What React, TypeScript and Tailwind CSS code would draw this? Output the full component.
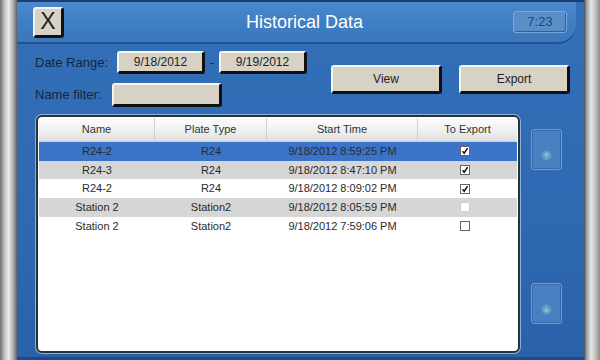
import React from "react";

const rows = [
  { name: "R24-2", plate: "R24", time: "9/18/2012 8:59:25 PM", checked: true, bg: "bg-[#3a73c8]" },
  { name: "R24-3", plate: "R24", time: "9/18/2012 8:47:10 PM", checked: true, bg: "bg-[#d6d6d6]" },
  { name: "R24-2", plate: "R24", time: "9/18/2012 8:09:02 PM", checked: true, bg: "bg-white" },
  { name: "Station 2", plate: "Station2", time: "9/18/2012 8:05:59 PM", checked: false, bg: "bg-[#d6d6d6]", faint: true },
  { name: "Station 2", plate: "Station2", time: "9/18/2012 7:59:06 PM", checked: false, bg: "bg-white" },
];

function StoneButton({ className, children }: { className: string; children?: React.ReactNode }) {
  return (
    <div
      className={
        "flex items-center justify-center rounded-[3px] bg-[#d8d2c5] border-t-2 border-l-2 border-t-[#f4f4f4] border-l-[#f4f4f4] border-b-[3px] border-r-[3px] border-b-[#111] border-r-[#111] text-[#222] " +
        className
      }
    >
      {children}
    </div>
  );
}

function Check({ checked, faint }: { checked: boolean; faint?: boolean }) {
  return (
    <div
      className={
        "w-[10px] h-[10px] flex items-center justify-center bg-white border " +
        (faint ? "border-[#d0d0d0]" : "border-[#666]")
      }
    >
      {checked && (
        <svg width="8" height="8" viewBox="0 0 8 8">
          <path d="M1.5 4.2 L3.2 6.2 L6.6 1.2" stroke="#111" strokeWidth="1.5" fill="none" />
        </svg>
      )}
    </div>
  );
}

function ScrollBtn({ down }: { down?: boolean }) {
  return (
    <div className="w-[31px] h-[41px] rounded-[3px] bg-[#4a7fc2] border border-[#6b9ad4] shadow-[inset_0_0_0_1px_rgba(30,70,130,0.4)] flex items-end justify-center pb-[8px]">
      <svg width="11" height="11" viewBox="0 0 11 11">
        <circle cx="5.5" cy="5.5" r="5" fill="#5d9bc6" />
        {down ? (
          <path d="M5.5 2.5 V8 M3 5.5 L5.5 8 L8 5.5" stroke="#8cc0dc" strokeWidth="1.4" fill="none" />
        ) : (
          <path d="M5.5 8.5 V3 M3 5.5 L5.5 3 L8 5.5" stroke="#8cc0dc" strokeWidth="1.4" fill="none" />
        )}
      </svg>
    </div>
  );
}

export default function App() {
  return (
    <div
      className="w-[600px] h-[360px] flex bg-[#2d66b0] overflow-hidden"
      style={{ fontFamily: '"Liberation Sans", Arial, sans-serif' }}
    >
      {/* left silver frame */}
      <div className="w-[17px] h-full bg-[linear-gradient(90deg,#6e6e6e_0%,#bdbdbd_25%,#ececec_50%,#a8a8a8_80%,#5f5f5f_100%)]" />
      {/* center */}
      <div className="flex-1 flex flex-col border-t-2 border-b-[3px] border-t-[#1d3f70] border-b-[#1f4a85] bg-[linear-gradient(180deg,#3370b8_0%,#2e69b2_60%,#2a62a9_100%)]">
        {/* header */}
        <div className="h-[42px] mr-[8px] rounded-br-[18px] bg-[linear-gradient(180deg,#4b89cc_0%,#3f7ec4_55%,#3a77bd_100%)] border-b-2 border-[#23528f] flex items-center pl-[16px] pr-[9px]">
          <StoneButton className="w-[31px] h-[31px] text-[23px] leading-none">X</StoneButton>
          <div className="flex-1 text-center text-white text-[18px] pl-[32px]">Historical Data</div>
          <div className="w-[54px] h-[22px] rounded-[3px] bg-[#5a8ec8] border border-[#7aa7d8] shadow-[inset_-1px_-1px_0_#2d5d9a] flex items-center justify-center text-[13px] text-[#27466e]">
            7:23
          </div>
        </div>
        {/* controls */}
        <div className="flex pl-[18px] pt-[7px] h-[71px]">
          <div className="flex flex-col gap-[9px] text-[13px] text-[#152440]">
            <div className="flex items-center h-[23px]">
              <span className="w-[82px]">Date Range:</span>
              <StoneButton className="w-[88px] h-[23px] text-[12px]">9/18/2012</StoneButton>
              <span className="w-[14px] text-center">-</span>
              <StoneButton className="w-[88px] h-[23px] text-[12px]">9/19/2012</StoneButton>
            </div>
            <div className="flex items-center h-[24px]">
              <span className="w-[77px]">Name filter:</span>
              <StoneButton className="w-[110px] h-[24px]" />
            </div>
          </div>
          <div className="flex gap-[17px] ml-[24px] mt-[14px]">
            <StoneButton className="w-[111px] h-[29px] text-[12px]">View</StoneButton>
            <StoneButton className="w-[111px] h-[29px] text-[12px]">Export</StoneButton>
          </div>
        </div>
        {/* table + side buttons */}
        <div className="flex flex-1 pl-[19px] pb-[3px]">
          <div className="w-[484px] h-[238px] rounded-[6px] border-2 border-[#24343c] bg-white shadow-[0_0_0_1px_#8fb0d6] p-[1px] overflow-hidden">
            <div className="flex h-[24px] bg-[linear-gradient(180deg,#fdfdfd_0%,#eeeeee_60%,#dedede_100%)] text-[11px] text-[#333] border-b border-[#cfcfcf]">
              <div className="w-[116px] flex items-center justify-center border-r border-[#cfcfcf]">Name</div>
              <div className="w-[112px] flex items-center justify-center border-r border-[#cfcfcf]">Plate Type</div>
              <div className="w-[151px] flex items-center justify-center border-r border-[#cfcfcf]">Start Time</div>
              <div className="flex-1 flex items-center justify-center">To Export</div>
            </div>
            {rows.map((r, i) => (
              <div key={i} className={"flex h-[18.7px] text-[11px] text-[#2a2a2a] " + r.bg}>
                <div className="w-[116px] flex items-center justify-center">{r.name}</div>
                <div className="w-[112px] flex items-center justify-center">{r.plate}</div>
                <div className="w-[151px] flex items-center justify-center">{r.time}</div>
                <div className="flex-1 flex items-center justify-center pr-[6px]">
                  <Check checked={r.checked} faint={r.faint} />
                </div>
              </div>
            ))}
          </div>
          <div className="flex flex-col justify-between ml-[11px] pt-[14px] pb-[30px]">
            <ScrollBtn />
            <ScrollBtn down />
          </div>
        </div>
      </div>
      {/* right silver frame */}
      <div className="w-[16px] h-full bg-[linear-gradient(90deg,#3b4a5c_0%,#9a9a9a_15%,#e6e6e6_45%,#c4c4c4_70%,#8a8a8a_100%)]" />
    </div>
  );
}
